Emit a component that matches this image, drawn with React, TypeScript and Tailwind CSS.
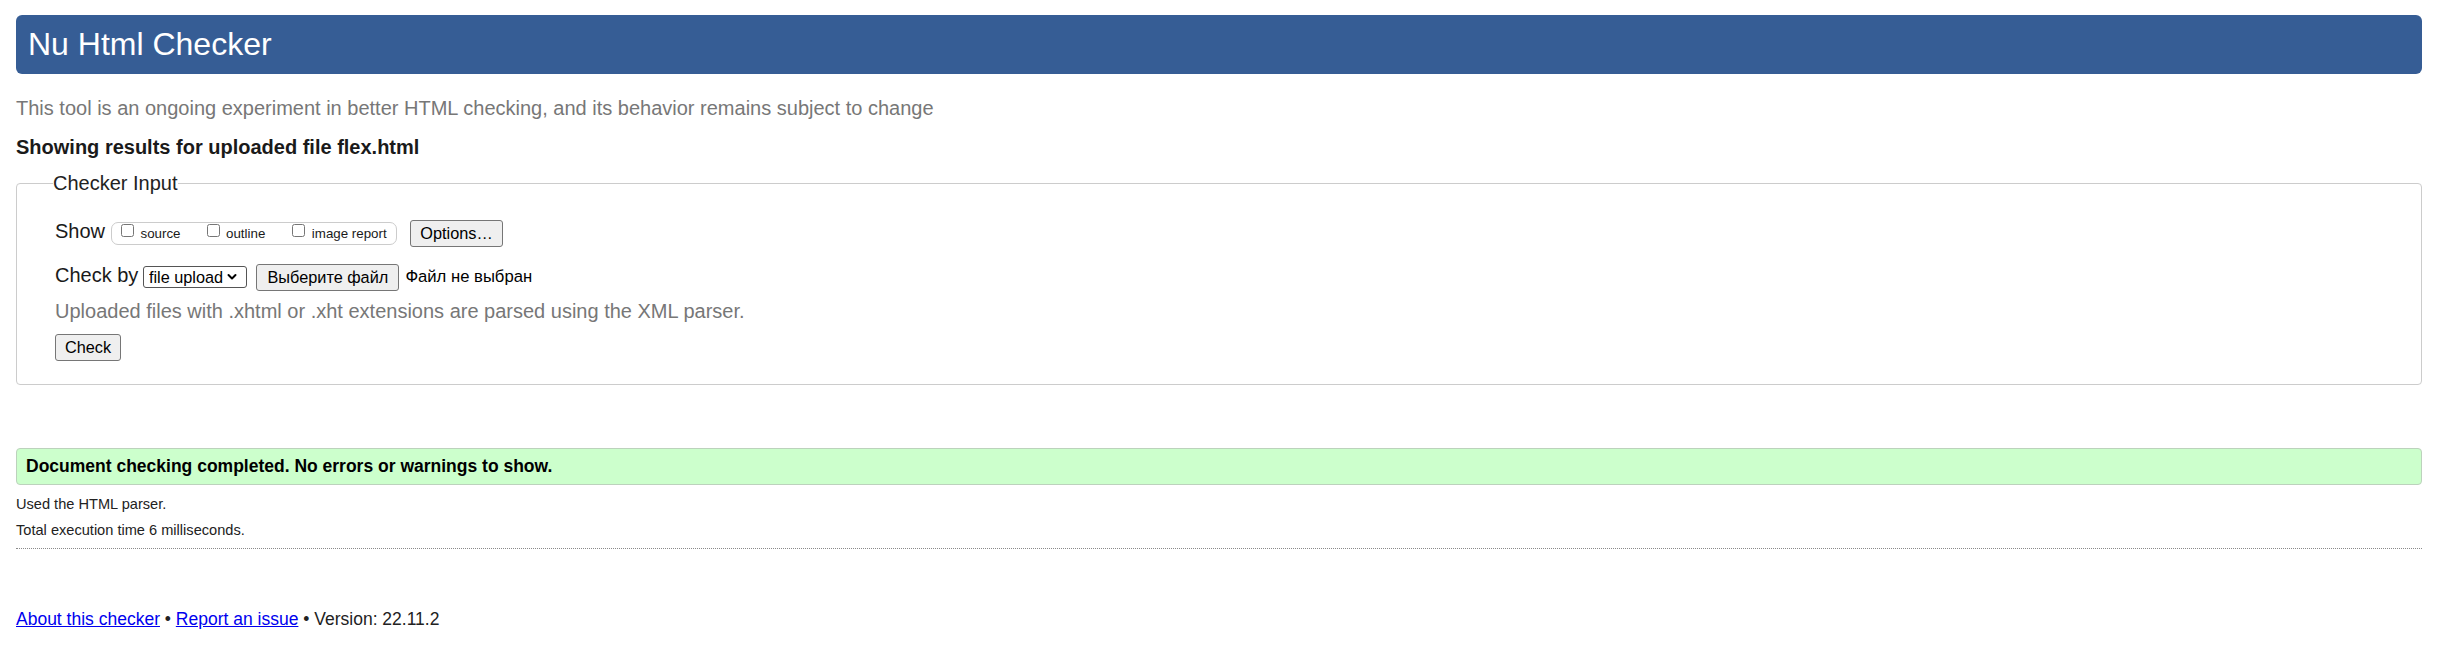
import React from 'react'

function Chevron({ className }: { className?: string }) {
  return (
    <svg viewBox="0 0 10 7" fill="none" stroke="currentColor" strokeWidth="2" className={className} aria-hidden="true">
      <path strokeLinecap="round" strokeLinejoin="round" d="M1.5 1.5l3.5 3.5 3.5-3.5" />
    </svg>
  )
}

const btn =
  'inline-flex items-center justify-center h-[27px] border border-[#767676] bg-[#efefef] rounded-[3px] text-[16.3px] leading-[19px] text-black'

export default function App() {
  const showOptions = ['source', 'outline', 'image report']

  return (
    <div className="min-h-screen bg-white pl-[16px] pr-[15px] pt-[15px] font-['Liberation_Sans',Arial,sans-serif] text-[#1a1a1a]">
      {/* Title bar */}
      <h1 className="bg-[#365d95] text-white rounded-[6px] text-[32px] leading-[37px] py-[11px] px-[12px] font-normal">
        Nu Html Checker
      </h1>

      <p className="mt-[23px] text-[20px] leading-[23px] text-[#777]">
        This tool is an ongoing experiment in better HTML checking, and its behavior remains subject to change
      </p>

      <p className="mt-[16px] text-[20px] leading-[23px] font-bold text-[#1a1a1a]">
        Showing results for uploaded file flex.html
      </p>

      {/* Checker input form */}
      <fieldset className="mt-[13px] border border-[#cccccc] rounded-[4px] pl-[38px] pr-[16px] pt-[24px] pb-[23px]">
        <legend className="p-0 -ml-[2px] text-[20px] leading-[23px] text-[#222]">Checker Input</legend>

        <div className="flex items-center h-[28px]">
          <span className="mb-[3px] text-[20px] leading-[23px]">Show</span>
          <span className="ml-[6px] flex items-center w-[286px] h-[23px] border border-[#cccccc] rounded-[7px] pl-[9px]">
            {showOptions.map((label, i) => (
              <label key={label} className={`flex items-center ${i > 0 ? (i === 1 ? 'ml-[26px]' : 'ml-[27px]') : ''}`}>
                <input type="checkbox" className="m-0 mb-[6px] w-[13px] h-[13px]" />
                <span className="ml-[6.5px] text-[13.33px] leading-[15px] text-[#1a1a1a]">{label}</span>
              </label>
            ))}
          </span>
          <button type="button" className={`${btn} ml-[13px] w-[93px]`}>
            Options…
          </button>
        </div>

        <div className="mt-[16px] flex items-center h-[28px]">
          <span className="mb-[3px] text-[20px] leading-[23px]">Check by</span>
          <span className="relative ml-[4.5px] inline-flex">
            <select className="appearance-none w-[104px] h-[22px] border border-[#555] rounded-[3px] bg-white pl-[5px] text-[16.3px] leading-[20px] text-black">
              <option>file upload</option>
            </select>
            <Chevron className="absolute right-[10px] top-1/2 -translate-y-1/2 w-[10px] h-[7px] text-black pointer-events-none" />
          </span>
          <button type="button" className={`${btn} ml-[9.5px] w-[143px]`}>
            Выберите файл
          </button>
          <span className="ml-[6px] mb-[2px] text-[16.67px] leading-[19px] text-black">Файл не выбран</span>
        </div>

        <p className="mt-[9px] text-[20px] leading-[23px] text-[#777]">
          Uploaded files with .xhtml or .xht extensions are parsed using the XML parser.
        </p>

        <div className="mt-[11px] flex">
          <button type="button" className={`${btn} w-[66px]`}>
            Check
          </button>
        </div>
      </fieldset>

      {/* Result */}
      <div className="mt-[63px] bg-[#ccffcc] border border-[#bcd2bc] rounded-[4px] pl-[9px] pt-[7px] pb-[8px] text-[17.5px] leading-[20px] font-bold text-black">
        Document checking completed. No errors or warnings to show.
      </div>

      <p className="mt-[11px] text-[14.6px] leading-[17px] text-[#222]">Used the HTML parser.</p>
      <p className="mt-[9px] text-[14.6px] leading-[17px] text-[#222]">Total execution time 6 milliseconds.</p>

      <div className="mt-[9px] h-0 border-t border-dotted border-[#8a8a8a]" />

      {/* Footer */}
      <p className="mt-[60px] text-[17.5px] leading-[21px] text-[#222]">
        <a href="#about" className="text-[#0000ee] underline">About this checker</a>
        {' • '}
        <a href="#issue" className="text-[#0000ee] underline">Report an issue</a>
        {' • Version: 22.11.2'}
      </p>
    </div>
  )
}
